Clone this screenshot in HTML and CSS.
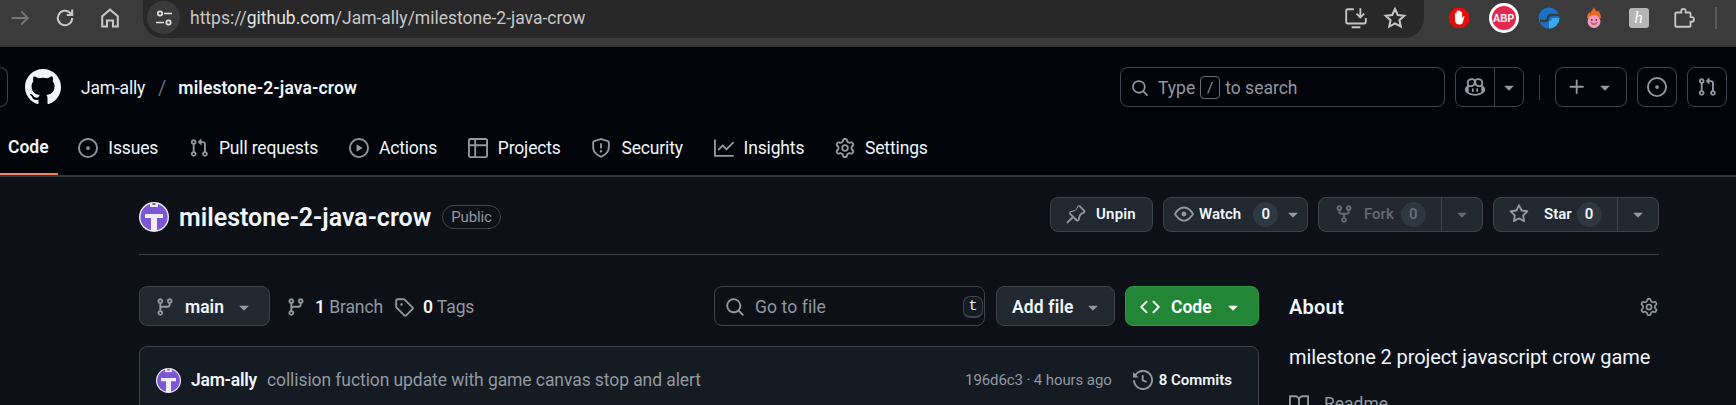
FILE: index.html
```html
<!DOCTYPE html>
<html lang="en">
<head>
    <meta charset="UTF-8">
    <meta name="viewport" content="width=device-width, initial-scale=1.0">
    <title>Jam-ally/milestone-2-java-crow</title>
    <link rel="stylesheet" href="styles.css">
</head>
<body>

<svg class="sprite" xmlns="http://www.w3.org/2000/svg">
    <symbol id="i-github" viewBox="0 0 16 16"><path d="M8 0c4.42 0 8 3.58 8 8a8.013 8.013 0 0 1-5.45 7.59c-.4.08-.55-.17-.55-.38 0-.27.01-1.13.01-2.2 0-.75-.25-1.23-.54-1.48 1.78-.2 3.65-.88 3.65-3.95 0-.88-.31-1.59-.82-2.15.08-.2.36-1.02-.08-2.12 0 0-.67-.22-2.2.82-.64-.18-1.32-.27-2-.27-.68 0-1.36.09-2 .27-1.53-1.03-2.2-.82-2.2-.82-.44 1.1-.16 1.92-.08 2.12-.51.56-.82 1.28-.82 2.15 0 3.06 1.86 3.75 3.64 3.95-.23.2-.44.55-.51 1.07-.46.21-1.61.55-2.33-.66-.15-.24-.6-.83-1.23-.82-.67.01-.27.38.01.53.34.19.73.9.82 1.13.16.45.68 1.31 2.69.94 0 .67.01 1.3.01 1.49 0 .21-.15.45-.55.38A7.995 7.995 0 0 1 0 8c0-4.42 3.58-8 8-8Z"/></symbol>
    <symbol id="i-issue" viewBox="0 0 16 16"><path d="M8 9.5a1.5 1.5 0 1 0 0-3 1.5 1.5 0 0 0 0 3Z"/><path d="M8 0a8 8 0 1 1 0 16A8 8 0 0 1 8 0ZM1.5 8a6.5 6.5 0 1 0 13 0 6.5 6.5 0 0 0-13 0Z"/></symbol>
    <symbol id="i-pr" viewBox="0 0 16 16"><path d="M1.5 3.25a2.25 2.25 0 1 1 3 2.122v5.256a2.251 2.251 0 1 1-1.5 0V5.372A2.25 2.25 0 0 1 1.5 3.25Zm5.677-.177L9.573.677A.25.25 0 0 1 10 .854V2.5h1A2.5 2.5 0 0 1 13.5 5v5.628a2.251 2.251 0 1 1-1.5 0V5a1 1 0 0 0-1-1h-1v1.646a.25.25 0 0 1-.427.177L7.177 3.427a.25.25 0 0 1 0-.354ZM3.75 2.5a.75.75 0 1 0 0 1.5.75.75 0 0 0 0-1.5Zm0 9.5a.75.75 0 1 0 0 1.5.75.75 0 0 0 0-1.5Zm8.25.75a.75.75 0 1 0 1.5 0 .75.75 0 0 0-1.5 0Z"/></symbol>
    <symbol id="i-play" viewBox="0 0 16 16"><path d="M8 0a8 8 0 1 1 0 16A8 8 0 0 1 8 0ZM1.5 8a6.5 6.5 0 1 0 13 0 6.5 6.5 0 0 0-13 0Zm4.879-2.773 4.264 2.559a.25.25 0 0 1 0 .428l-4.264 2.559A.25.25 0 0 1 6 10.559V5.442a.25.25 0 0 1 .379-.215Z"/></symbol>
    <symbol id="i-table" viewBox="0 0 16 16"><path d="M0 1.75C0 .784.784 0 1.75 0h12.5C15.216 0 16 .784 16 1.75v12.5A1.75 1.75 0 0 1 14.25 16H1.75A1.75 1.75 0 0 1 0 14.25ZM6.5 6.5v8h7.75a.25.25 0 0 0 .25-.25V6.5Zm8-1.5V1.75a.25.25 0 0 0-.25-.25H6.5V5Zm-13 1.5v7.75c0 .138.112.25.25.25H5v-8ZM5 5V1.5H1.75a.25.25 0 0 0-.25.25V5Z"/></symbol>
    <symbol id="i-shield" viewBox="0 0 16 16"><path d="M7.467.133a1.748 1.748 0 0 1 1.066 0l5.25 1.68A1.75 1.75 0 0 1 15 3.48V7c0 1.566-.32 3.182-1.303 4.682-.983 1.498-2.585 2.813-5.032 3.855a1.697 1.697 0 0 1-1.33 0c-2.447-1.042-4.049-2.357-5.032-3.855C1.32 10.182 1 8.566 1 7V3.48a1.75 1.75 0 0 1 1.217-1.667Zm.61 1.429a.25.25 0 0 0-.153 0l-5.25 1.68a.25.25 0 0 0-.174.238V7c0 1.358.275 2.666 1.057 3.86.784 1.194 2.121 2.34 4.366 3.297a.196.196 0 0 0 .154 0c2.245-.956 3.582-2.104 4.366-3.298C13.225 9.666 13.5 8.36 13.5 7V3.48a.25.25 0 0 0-.174-.237l-5.25-1.68ZM8.75 4.75v3a.75.75 0 0 1-1.5 0v-3a.75.75 0 0 1 1.5 0ZM9 10.5a1 1 0 1 1-2 0 1 1 0 0 1 2 0Z"/></symbol>
    <symbol id="i-graph" viewBox="0 0 16 16"><path d="M1.5 1.75V13.5h13.75a.75.75 0 0 1 0 1.5H.75a.75.75 0 0 1-.75-.75V1.75a.75.75 0 0 1 1.5 0Zm14.28 2.53-5.25 5.25a.75.75 0 0 1-1.06 0L7 7.06 4.28 9.78a.751.751 0 0 1-1.042-.018.751.751 0 0 1-.018-1.042l3.25-3.25a.75.75 0 0 1 1.06 0L10 7.94l4.72-4.72a.751.751 0 0 1 1.042.018.751.751 0 0 1 .018 1.042Z"/></symbol>
    <symbol id="i-gear" viewBox="0 0 16 16"><path d="M8 0a8.2 8.2 0 0 1 .701.031C9.444.095 9.99.645 10.16 1.29l.288 1.107c.018.066.079.158.212.224.231.114.454.243.668.386.123.082.233.09.299.071l1.103-.303c.644-.176 1.392.021 1.82.63.27.385.506.792.704 1.218.315.675.111 1.422-.364 1.891l-.814.806c-.049.048-.098.147-.088.294.016.257.016.515 0 .772-.01.147.038.246.088.294l.814.806c.475.469.679 1.216.364 1.891a7.977 7.977 0 0 1-.704 1.217c-.428.61-1.176.807-1.82.63l-1.102-.302c-.067-.019-.177-.011-.3.071a5.909 5.909 0 0 1-.668.386c-.133.066-.194.158-.211.224l-.29 1.106c-.168.646-.715 1.196-1.458 1.26a8.006 8.006 0 0 1-1.402 0c-.743-.064-1.289-.614-1.458-1.26l-.289-1.106c-.018-.066-.079-.158-.212-.224a5.738 5.738 0 0 1-.668-.386c-.123-.082-.233-.09-.299-.071l-1.103.303c-.644.176-1.392-.021-1.82-.63a8.12 8.12 0 0 1-.704-1.218c-.315-.675-.111-1.422.363-1.891l.815-.806c.05-.048.098-.147.088-.294a6.214 6.214 0 0 1 0-.772c.01-.147-.038-.246-.088-.294l-.815-.806C.635 6.045.431 5.298.746 4.623a7.92 7.92 0 0 1 .704-1.217c.428-.61 1.176-.807 1.82-.63l1.102.302c.067.019.177.011.3-.071.214-.143.437-.272.668-.386.133-.066.194-.158.211-.224l.29-1.106C6.009.645 6.556.095 7.299.03 7.53.01 7.764 0 8 0Zm-.571 1.525c-.036.003-.108.036-.137.146l-.289 1.105c-.147.561-.549.967-.998 1.189-.173.086-.34.183-.5.29-.417.278-.97.423-1.529.27l-1.103-.303c-.109-.03-.175.016-.195.045-.22.312-.412.644-.573.99-.014.031-.021.11.059.19l.815.806c.411.406.562.957.53 1.456a4.709 4.709 0 0 0 0 .582c.032.499-.119 1.05-.53 1.456l-.815.806c-.081.08-.073.159-.059.19.162.346.353.677.573.989.02.03.085.076.195.046l1.102-.303c.56-.153 1.113-.008 1.53.27.161.107.328.204.501.29.447.222.85.629.997 1.189l.289 1.105c.029.109.101.143.137.146a6.6 6.6 0 0 0 1.142 0c.036-.003.108-.036.137-.146l.289-1.105c.147-.561.549-.967.998-1.189.173-.086.34-.183.5-.29.417-.278.97-.423 1.529-.27l1.103.303c.109.029.175-.016.195-.045.22-.313.411-.644.573-.99.014-.031.021-.11-.059-.19l-.815-.806c-.411-.406-.562-.957-.53-1.456a4.709 4.709 0 0 0 0-.582c-.032-.499.119-1.05.53-1.456l.815-.806c.081-.08.073-.159.059-.19a6.464 6.464 0 0 0-.573-.989c-.02-.03-.085-.076-.195-.046l-1.102.303c-.56.153-1.113.008-1.53-.27a4.44 4.44 0 0 0-.501-.29c-.447-.222-.85-.629-.997-1.189l-.289-1.105c-.029-.11-.101-.143-.137-.146a6.6 6.6 0 0 0-1.142 0ZM11 8a3 3 0 1 1-6 0 3 3 0 0 1 6 0ZM9.5 8a1.5 1.5 0 1 0-3.001.001A1.5 1.5 0 0 0 9.5 8Z"/></symbol>
    <symbol id="i-search" viewBox="0 0 16 16"><path d="M10.68 11.74a6 6 0 0 1-7.922-8.982 6 6 0 0 1 8.982 7.922l3.04 3.04a.749.749 0 0 1-.326 1.275.749.749 0 0 1-.734-.215ZM11.5 7a4.499 4.499 0 1 0-8.997 0A4.499 4.499 0 0 0 11.5 7Z"/></symbol>
    <symbol id="i-plus" viewBox="0 0 16 16"><path d="M7.75 2a.75.75 0 0 1 .75.75V7h4.25a.75.75 0 0 1 0 1.5H8.5v4.25a.75.75 0 0 1-1.5 0V8.5H2.75a.75.75 0 0 1 0-1.5H7V2.75A.75.75 0 0 1 7.75 2Z"/></symbol>
    <symbol id="i-branch" viewBox="0 0 16 16"><path d="M9.5 3.25a2.25 2.25 0 1 1 3 2.122V6A2.5 2.5 0 0 1 10 8.5H6a1 1 0 0 0-1 1v1.128a2.251 2.251 0 1 1-1.5 0V5.372a2.25 2.25 0 1 1 1.5 0v1.836A2.493 2.493 0 0 1 6 7h4a1 1 0 0 0 1-1v-.628A2.25 2.25 0 0 1 9.5 3.25Zm-6 0a.75.75 0 1 0 1.5 0 .75.75 0 0 0-1.5 0Zm8.25-.75a.75.75 0 1 0 0 1.5.75.75 0 0 0 0-1.5ZM4.25 12a.75.75 0 1 0 0 1.5.75.75 0 0 0 0-1.5Z"/></symbol>
    <symbol id="i-tag" viewBox="0 0 16 16"><path d="M1 7.775V2.75C1 1.784 1.784 1 2.75 1h5.025c.464 0 .91.184 1.238.513l6.25 6.25a1.75 1.75 0 0 1 0 2.474l-5.026 5.026a1.75 1.75 0 0 1-2.474 0l-6.25-6.25A1.752 1.752 0 0 1 1 7.775Zm1.5 0c0 .066.026.13.073.177l6.25 6.25a.25.25 0 0 0 .354 0l5.025-5.025a.25.25 0 0 0 0-.354l-6.25-6.25a.25.25 0 0 0-.177-.073H2.75a.25.25 0 0 0-.25.25ZM6 5a1 1 0 1 1 0 2 1 1 0 0 1 0-2Z"/></symbol>
    <symbol id="i-pin" viewBox="0 0 16 16"><path d="m11.294.984 3.722 3.722a1.75 1.75 0 0 1-.504 2.826l-1.327.613a3.089 3.089 0 0 0-1.707 2.084l-.584 2.454c-.317 1.332-1.972 1.8-2.94.832L5.75 11.311 1.78 15.28a.749.749 0 0 1-1.275-.326.749.749 0 0 1 .215-.734L4.69 10.25 2.985 8.545c-.968-.968-.5-2.623.832-2.94l2.454-.584a3.08 3.08 0 0 0 2.084-1.707l.613-1.327a1.75 1.75 0 0 1 2.826-.504ZM6.283 9.723l2.732 2.731a.25.25 0 0 0 .42-.119l.584-2.454a4.586 4.586 0 0 1 2.537-3.098l1.328-.613a.25.25 0 0 0 .072-.404l-3.722-3.722a.25.25 0 0 0-.404.072l-.613 1.328a4.584 4.584 0 0 1-3.098 2.537l-2.454.584a.25.25 0 0 0-.119.42l2.731 2.732Z"/></symbol>
    <symbol id="i-eye" viewBox="0 0 16 16"><path d="M8 2c1.981 0 3.671.992 4.933 2.078 1.27 1.091 2.187 2.345 2.637 3.023a1.62 1.62 0 0 1 0 1.798c-.45.678-1.367 1.932-2.637 3.023C11.67 13.008 9.981 14 8 14c-1.981 0-3.671-.992-4.933-2.078C1.797 10.83.88 9.576.43 8.898a1.62 1.62 0 0 1 0-1.798c.45-.677 1.367-1.931 2.637-3.022C4.33 2.992 6.019 2 8 2ZM1.679 7.932a.12.12 0 0 0 0 .136c.411.622 1.241 1.75 2.366 2.717C5.176 11.758 6.527 12.5 8 12.5c1.473 0 2.825-.742 3.955-1.715 1.124-.967 1.954-2.096 2.366-2.717a.12.12 0 0 0 0-.136c-.412-.621-1.242-1.75-2.366-2.717C10.824 4.242 9.473 3.5 8 3.5c-1.473 0-2.825.742-3.955 1.715-1.124.967-1.954 2.096-2.366 2.717ZM8 10a2 2 0 1 1-.001-3.999A2 2 0 0 1 8 10Z"/></symbol>
    <symbol id="i-fork" viewBox="0 0 16 16"><path d="M5 5.372v.878c0 .414.336.75.75.75h4.5a.75.75 0 0 0 .75-.75v-.878a2.25 2.25 0 1 1 1.5 0v.878a2.25 2.25 0 0 1-2.25 2.25h-1.5v2.128a2.251 2.251 0 1 1-1.5 0V8.5h-1.5A2.25 2.25 0 0 1 3.5 6.25v-.878a2.25 2.25 0 1 1 1.5 0ZM5 3.25a.75.75 0 1 0-1.5 0 .75.75 0 0 0 1.5 0Zm6.75.75a.75.75 0 1 0 0-1.5.75.75 0 0 0 0 1.5Zm-3 8.75a.75.75 0 1 0-1.5 0 .75.75 0 0 0 1.5 0Z"/></symbol>
    <symbol id="i-star" viewBox="0 0 16 16"><path d="M8 .25a.75.75 0 0 1 .673.418l1.882 3.815 4.21.612a.75.75 0 0 1 .416 1.279l-3.046 2.97.719 4.192a.751.751 0 0 1-1.088.791L8 12.347l-3.766 1.98a.75.75 0 0 1-1.088-.79l.72-4.194L.818 6.374a.75.75 0 0 1 .416-1.28l4.21-.611L7.327.668A.75.75 0 0 1 8 .25Zm0 2.445L6.615 5.5a.75.75 0 0 1-.564.41l-3.097.45 2.24 2.184a.75.75 0 0 1 .216.664l-.528 3.084 2.769-1.456a.75.75 0 0 1 .698 0l2.77 1.456-.53-3.084a.75.75 0 0 1 .216-.664l2.24-2.183-3.096-.45a.75.75 0 0 1-.564-.41L8 2.694Z"/></symbol>
    <symbol id="i-code" viewBox="0 0 16 16"><path d="m11.28 3.22 4.25 4.25a.75.75 0 0 1 0 1.06l-4.25 4.25a.749.749 0 0 1-1.275-.326.749.749 0 0 1 .215-.734L13.94 8l-3.72-3.72a.749.749 0 0 1 .326-1.275.749.749 0 0 1 .734.215Zm-6.56 0a.751.751 0 0 1 1.042.018.751.751 0 0 1 .018 1.042L2.06 8l3.72 3.72a.749.749 0 0 1-.326 1.275.749.749 0 0 1-.734-.215L.47 8.53a.75.75 0 0 1 0-1.06Z"/></symbol>
    <symbol id="i-history" viewBox="0 0 16 16"><path d="m.427 1.927 1.215 1.215a8.002 8.002 0 1 1-1.6 5.685.75.75 0 1 1 1.493-.154 6.5 6.5 0 1 0 1.18-4.458l1.358 1.358A.25.25 0 0 1 3.896 6H.25A.25.25 0 0 1 0 5.75V2.104a.25.25 0 0 1 .427-.177ZM7.75 4a.75.75 0 0 1 .75.75v2.992l2.028.812a.75.75 0 0 1-.557 1.392l-2.5-1A.751.751 0 0 1 7 8.25v-3.5A.75.75 0 0 1 7.75 4Z"/></symbol>
    <symbol id="i-book" viewBox="0 0 16 16"><path d="M0 1.75A.75.75 0 0 1 .75 1h4.253c1.227 0 2.317.59 3 1.501A3.743 3.743 0 0 1 11.006 1h4.245a.75.75 0 0 1 .75.75v10.5a.75.75 0 0 1-.75.75h-4.507a2.25 2.25 0 0 0-1.591.659l-.622.621a.75.75 0 0 1-1.06 0l-.622-.621A2.25 2.25 0 0 0 5.258 13H.75a.75.75 0 0 1-.75-.75Zm7.251 10.324.004-5.073-.002-2.253A2.25 2.25 0 0 0 5.003 2.5H1.5v9h3.757a3.75 3.75 0 0 1 1.994.574ZM8.755 4.75l-.004 7.322a3.752 3.752 0 0 1 1.992-.572H14.5v-9h-3.495a2.25 2.25 0 0 0-2.25 2.25Z"/></symbol>
    <symbol id="i-caret" viewBox="0 0 16 16"><path d="m4.427 7.427 3.396 3.396a.25.25 0 0 0 .354 0l3.396-3.396A.25.25 0 0 0 11.396 7H4.604a.25.25 0 0 0-.177.427Z"/></symbol>
    <symbol id="i-copilot" viewBox="0 0 16 16"><path d="M7.998 15.035c-4.562 0-7.873-2.914-7.998-3.749V9.338c.085-.628.677-1.686 1.588-2.065.013-.07.024-.143.036-.218.029-.183.06-.384.126-.612-.201-.508-.254-1.084-.254-1.656 0-.87.128-1.769.693-2.484.579-.733 1.494-1.124 2.724-1.261 1.206-.134 2.262.034 2.944.765.05.053.096.108.139.165.044-.057.094-.112.143-.165.682-.731 1.738-.899 2.944-.765 1.23.137 2.145.528 2.724 1.261.566.715.693 1.614.693 2.484 0 .572-.053 1.148-.254 1.656.066.228.098.429.126.612.012.076.024.148.037.218.924.385 1.522 1.471 1.591 2.095v1.872c0 .766-3.351 3.795-8.002 3.795Zm0-1.485c2.28 0 4.584-1.11 5.002-1.433V7.862l-.023-.116c-.49.21-1.075.291-1.727.291-1.146 0-2.059-.327-2.71-.991A3.222 3.222 0 0 1 8 6.303a3.24 3.24 0 0 1-.544.743c-.65.664-1.563.991-2.71.991-.652 0-1.236-.081-1.727-.291l-.023.116v4.255c.419.323 2.722 1.433 5.002 1.433ZM6.762 2.83c-.193-.206-.637-.413-1.682-.297-1.019.113-1.479.404-1.713.7-.247.312-.369.789-.369 1.554 0 .793.129 1.171.308 1.371.162.181.519.379 1.442.379.853 0 1.339-.235 1.638-.54.315-.322.527-.827.617-1.553.117-.935-.037-1.395-.241-1.614Zm4.155-.297c-1.044-.116-1.488.091-1.681.297-.204.219-.359.679-.242 1.614.091.726.303 1.231.618 1.553.299.305.784.54 1.638.54.922 0 1.28-.198 1.442-.379.179-.2.308-.578.308-1.371 0-.765-.123-1.242-.37-1.554-.233-.296-.693-.587-1.713-.7Z"/><path d="M6.25 9.037a.75.75 0 0 1 .75.75v1.501a.75.75 0 0 1-1.5 0V9.787a.75.75 0 0 1 .75-.75Zm4.25.75v1.501a.75.75 0 0 1-1.5 0V9.787a.75.75 0 0 1 1.5 0Z"/></symbol>
    <symbol id="i-avatar" viewBox="0 0 30 30">
        <circle cx="15" cy="15" r="15" fill="#efeef4"/>
        <circle cx="15" cy="15" r="13.6" fill="#7d56d6"/>
        <path d="M11 1h8v4h-8z" fill="#efeef4"/>
        <path d="M13.5 1h3v2h-3z" fill="#7d56d6"/>
        <path d="M6 12h18v4h-6v13h-6V16H6z" fill="#efeef4"/>
    </symbol>
</svg>

<!-- browser toolbar -->
<div class="browser">
    <div class="browser-nav">
        <svg class="tb-icon dim" viewBox="0 0 20 20"><path d="M3 10h13M11 4.500l5.500 5.500-5.500 5.500"/></svg>
        <svg class="tb-icon" viewBox="0 0 20 20"><path d="M16 10a6 6 0 1 1-1.800-4.300L16 7.500M16 3v4.500h-4.500"/></svg>
        <svg class="tb-icon" viewBox="0 0 20 20"><path d="M3.500 17V8.500L10 3l6.500 5.500V17H12.500v-5h-5v5z"/></svg>
    </div>
    <div class="omnibox">
        <span class="site-info">
            <svg class="tb-icon small" viewBox="0 0 20 20"><circle cx="6" cy="5.500" r="2.200"/><path d="M10 5.500h8M2 14.500h8"/><circle cx="14.500" cy="14.500" r="2.200"/></svg>
        </span>
        <span class="url"><span class="url-scheme">https://</span>github.com<span class="url-scheme">/Jam-ally/milestone-2-java-crow</span></span>
        <span class="omni-right">
            <svg class="tb-icon" viewBox="0 0 22 22"><path d="M9 3H3.500A1.500 1.500 0 0 0 2 4.500v10A1.500 1.500 0 0 0 3.500 16h15a1.500 1.500 0 0 0 1.500-1.500V11M15 2v8M11.500 7l3.500 3.500L18.500 7M7 19.500h8"/></svg>
            <svg class="tb-icon" viewBox="0 0 20 20"><path d="M10 2.500l2.300 5 5.400.6-4 3.700 1.100 5.400L10 14.500l-4.800 2.700 1.100-5.400-4-3.700 5.400-.6z"/></svg>
        </span>
    </div>
    <div class="extensions">
        <span class="ext">
            <svg class="ext-svg" viewBox="0 0 22 22"><path d="M6.500 1h9L21 6.500v9L15.500 21h-9L1 15.500v-9z" fill="#e40d0d"/><path d="M7 11V7a1 1 0 0 1 1.600-.8V4.500a1 1 0 0 1 2 0V4a1 1 0 0 1 1.800 0v1a1 1 0 0 1 1.700.500V11l1-1.500c.8-.7 1.800 0 1.200 1L14.500 16c-.6 1-1.500 1.500-3 1.500-3 0-4.500-2-4.500-4.500z" fill="#fff"/></svg>
        </span>
        <span class="ext">
            <span class="abp"><span class="abp-label">ABP</span></span>
        </span>
        <span class="ext">
            <svg class="ext-svg" viewBox="0 0 22 22"><circle cx="11" cy="11" r="10.500" fill="#1a73c9"/><path d="M11 21.500A10.500 10.500 0 0 0 21.500 11H14a3 3 0 0 1-3 3z" fill="#37a8ee"/><path d="M21 8h-8c-2 0-3 1-3 3s-1 3-3 3H2" fill="none" stroke="#3b3b3b" stroke-width="2.400"/></svg>
        </span>
        <span class="ext">
            <svg class="ext-svg" viewBox="0 0 22 22"><path d="M11 0c.5 2.500 2.500 3.500 3 5 .5-.5.800-1 .8-1.800 2 2 3.200 4.500 3.200 7.800H4c0-2.500 1-4.500 2.500-6 0 1 .3 1.500.8 2C7.500 4 10 3 11 0z" fill="#f4651f"/><circle cx="11" cy="14.500" r="6.500" fill="#f59ab8"/><circle cx="8.800" cy="13" r=".9" fill="#7a2a3f"/><circle cx="13.200" cy="13" r=".9" fill="#7a2a3f"/><path d="M8 15.500c1 2.200 5 2.200 6 0" fill="none" stroke="#7a2a3f" stroke-width="1"/></svg>
        </span>
        <span class="ext">
            <span class="h-badge">h</span>
        </span>
        <span class="ext">
            <svg class="tb-icon" viewBox="0 0 22 22"><path d="M4 6h4.500V4.700a2 2 0 0 1 4 0V6H16a1 1 0 0 1 1 1v3.200h1a2.100 2.100 0 0 1 0 4.200h-1V18a1 1 0 0 1-1 1H4a1 1 0 0 1-1-1V7a1 1 0 0 1 1-1z"/></svg>
        </span>
        <span class="tb-divider"></span>
    </div>
</div>

<!-- github header -->
<header class="gh-header">
    <div class="top-row">
        <span class="menu-btn"></span>
        <svg class="logo"><use href="#i-github"/></svg>
        <span class="owner">Jam-ally</span>
        <span class="slash">/</span>
        <span class="repo-link">milestone-2-java-crow</span>

        <div class="search-box">
            <svg class="ic18 muted"><use href="#i-search"/></svg>
            <span>Type</span>
            <kbd class="slash-key">/</kbd>
            <span>to search</span>
        </div>
        <div class="head-btn copilot">
            <span class="copilot-main"><svg class="ic20 muted"><use href="#i-copilot"/></svg></span>
            <span class="copilot-caret"><svg class="ic20 muted"><use href="#i-caret"/></svg></span>
        </div>
        <span class="head-divider"></span>
        <div class="head-btn plus"><svg class="ic20 muted"><use href="#i-plus"/></svg><svg class="ic20 muted"><use href="#i-caret"/></svg></div>
        <div class="head-btn square"><svg class="ic20 muted"><use href="#i-issue"/></svg></div>
        <div class="head-btn square"><svg class="ic20 muted"><use href="#i-pr"/></svg></div>
    </div>
    <nav class="tabs">
        <a class="tab active" href="#">Code</a>
        <a class="tab" href="#"><svg class="ic20 muted"><use href="#i-issue"/></svg>Issues</a>
        <a class="tab" href="#"><svg class="ic20 muted"><use href="#i-pr"/></svg>Pull requests</a>
        <a class="tab" href="#"><svg class="ic20 muted"><use href="#i-play"/></svg>Actions</a>
        <a class="tab" href="#"><svg class="ic20 muted"><use href="#i-table"/></svg>Projects</a>
        <a class="tab" href="#"><svg class="ic20 muted"><use href="#i-shield"/></svg>Security</a>
        <a class="tab" href="#"><svg class="ic20 muted"><use href="#i-graph"/></svg>Insights</a>
        <a class="tab" href="#"><svg class="ic20 muted"><use href="#i-gear"/></svg>Settings</a>
    </nav>
</header>

<main class="repo">
    <div class="repo-head">
        <svg class="avatar"><use href="#i-avatar"/></svg>
        <h1 class="repo-title">milestone-2-java-crow</h1>
        <span class="public">Public</span>
        <div class="repo-actions">
            <div class="btn unpin"><svg class="ic20 muted"><use href="#i-pin"/></svg>Unpin</div>
            <div class="btn watch"><svg class="ic20 muted"><use href="#i-eye"/></svg>Watch<span class="count">0</span><svg class="ic20 muted"><use href="#i-caret"/></svg></div>
            <div class="btn split fork disabled">
                <span class="split-main"><svg class="ic20"><use href="#i-fork"/></svg>Fork<span class="count">0</span></span>
                <span class="split-caret"><svg class="ic20"><use href="#i-caret"/></svg></span>
            </div>
            <div class="btn split star">
                <span class="split-main"><svg class="ic20 muted"><use href="#i-star"/></svg>Star<span class="count">0</span></span>
                <span class="split-caret"><svg class="ic20 muted"><use href="#i-caret"/></svg></span>
            </div>
        </div>
    </div>

    <div class="repo-body">
        <section class="files">
            <div class="file-bar">
                <div class="btn branch-btn"><svg class="ic20 muted"><use href="#i-branch"/></svg><span>main</span><svg class="ic20 muted"><use href="#i-caret"/></svg></div>
                <span class="meta"><svg class="ic20 muted"><use href="#i-branch"/></svg><b>1</b> Branch</span>
                <span class="meta"><svg class="ic20 muted"><use href="#i-tag"/></svg><b>0</b> Tags</span>
                <div class="goto">
                    <svg class="ic20 muted"><use href="#i-search"/></svg>
                    <span class="goto-text">Go to file</span>
                    <kbd class="t-key">t</kbd>
                </div>
                <div class="btn add-file">Add file<svg class="ic20 muted"><use href="#i-caret"/></svg></div>
                <div class="btn code-btn"><svg class="ic20"><use href="#i-code"/></svg>Code<svg class="ic20"><use href="#i-caret"/></svg></div>
            </div>
            <div class="commit-box">
                <svg class="commit-avatar"><use href="#i-avatar"/></svg>
                <span class="commit-author">Jam-ally</span>
                <span class="commit-msg">collision fuction update with game canvas stop and alert</span>
                <span class="commit-time">196d6c3 · 4 hours ago</span>
                <svg class="ic20 muted"><use href="#i-history"/></svg>
                <span class="commit-count">8 Commits</span>
            </div>
        </section>

        <aside class="about">
            <div class="about-head">
                <h2>About</h2>
                <svg class="ic18 muted"><use href="#i-gear"/></svg>
            </div>
            <p class="about-text">milestone 2 project javascript crow game</p>
            <div class="about-link"><svg class="ic20 muted"><use href="#i-book"/></svg>Readme</div>
        </aside>
    </div>
</main>

</body>
</html>
```

FILE: styles.css
```css
* {
    box-sizing: border-box;
}
html, body {
    height: 405px;
    overflow: hidden;
}
body {
    margin: 0;
    background-color: #0d1117;
    color: #f0f6fc;
    font-family: Roboto, "Noto Sans", sans-serif;
    font-size: 17.5px;
}
.sprite {
    display: none;
}
a {
    color: inherit;
    text-decoration: none;
}
svg {
    flex: none;
    fill: currentColor;
}
.ic18 {
    width: 18px;
    height: 18px;
}
.ic20 {
    width: 20px;
    height: 20px;
}
.muted {
    color: #9198a1;
}

/* browser toolbar */
.browser {
    display: flex;
    height: 47px;
    background-color: #3b3b3b;
    border-bottom: 2px solid #343434;
}
.browser-nav {
    display: flex;
    gap: 5px;
    height: 36px;
    align-items: center;
}
.browser-nav .tb-icon {
    width: 40px;
}
.tb-icon {
    width: 24px;
    height: 24px;
    fill: none;
    stroke: #c7c7c7;
    stroke-width: 1.7;
}
.tb-icon.dim {
    stroke: #757575;
}
.tb-icon.small {
    width: 20px;
    height: 20px;
    stroke: #e3e3e3;
}
.omnibox {
    display: flex;
    align-items: center;
    width: 1281px;
    height: 38px;
    margin-left: 13px;
    padding: 0 17px 3px 4px;
    background-color: #282828;
    border-radius: 0 0 20px 20px;
}
.site-info {
    display: flex;
    align-items: center;
    justify-content: center;
    width: 33px;
    height: 33px;
    border-radius: 50%;
    background-color: #3b3b3b;
}
.url {
    margin-left: 10px;
    color: #e3e3e3;
}
.url-scheme {
    color: #c7c7c7;
}
.omni-right {
    display: flex;
    gap: 15px;
    margin-left: auto;
}
.extensions {
    display: flex;
    align-items: center;
    height: 36px;
    margin-left: 12px;
}
.ext {
    display: flex;
    align-items: center;
    justify-content: center;
    width: 45px;
}
.ext-svg {
    width: 22px;
    height: 22px;
}
.abp {
    display: flex;
    align-items: center;
    justify-content: center;
    width: 30px;
    height: 30px;
    border-radius: 50%;
    background-color: #e6284e;
    border: 3px solid #fff;
}
.abp-label {
    color: #fff;
    font-family: "Liberation Sans", sans-serif;
    font-size: 10px;
    font-weight: 700;
}
.h-badge {
    display: flex;
    align-items: center;
    justify-content: center;
    width: 20px;
    height: 20px;
    border-radius: 3px;
    background-color: #b5b5b5;
    color: #fff;
    font-family: "Liberation Serif", serif;
    font-style: italic;
    font-size: 17px;
}
.tb-divider {
    width: 2px;
    height: 22px;
    margin-left: 9px;
    background-color: #5a5a5a;
}

/* github header */
.gh-header {
    height: 130px;
    padding-top: 20px;
    background-color: #010409;
    border-bottom: 2px solid #30363d;
}
.top-row {
    display: flex;
    align-items: center;
    height: 40px;
}
.menu-btn {
    width: 8px;
    height: 40px;
    border: 1px solid #3d444d;
    border-left: 0;
    border-radius: 0 8px 8px 0;
}
.logo {
    width: 36px;
    height: 36px;
    margin-left: 17px;
    color: #f0f6fc;
}
.owner {
    margin: 1px 0 0 20px;
    letter-spacing: -.2px;
}
.slash {
    margin: 1px 0 0 13px;
    color: #656c76;
    font-size: 20px;
}
.repo-link {
    margin: 1px 0 0 12px;
    font-weight: 600;
    letter-spacing: .1px;
}
.search-box {
    display: flex;
    align-items: center;
    gap: 5px;
    width: 325px;
    height: 40px;
    margin-left: auto;
    padding: 1px 10px 0;
    border: 1px solid #3d444d;
    border-radius: 8px;
    color: #9198a1;
}
.search-box .ic18 {
    margin-right: 4px;
}
.slash-key {
    display: flex;
    align-items: center;
    justify-content: center;
    width: 20px;
    height: 23px;
    border: 1px solid #656c76;
    border-radius: 4px;
    font-family: inherit;
    font-size: 15px;
}
.head-btn {
    display: flex;
    align-items: center;
    height: 40px;
    border: 1px solid #3d444d;
    border-radius: 8px;
}
.copilot {
    width: 69px;
    margin-left: 10px;
}
.copilot-main {
    display: flex;
    align-items: center;
    justify-content: center;
    width: 40px;
    height: 100%;
    border-right: 1px solid #3d444d;
}
.copilot-caret {
    display: flex;
    align-items: center;
    justify-content: center;
    width: 28px;
}
.head-divider {
    width: 1px;
    height: 25px;
    margin: 0 15px;
    background-color: #3d444d;
}
.plus {
    justify-content: center;
    gap: 8px;
    width: 72px;
}
.square {
    justify-content: center;
    width: 40px;
    margin-left: 10px;
}
.head-btn.square:last-child {
    margin-right: 9px;
}
.tabs {
    display: flex;
    gap: 10.7px;
    height: 68px;
}
.tab {
    display: flex;
    align-items: center;
    gap: 10px;
    height: 68px;
    padding: 13px 10px 0;
    letter-spacing: -.15px;
}
.tab.active {
    padding: 13px 9px 0 8px;
    font-weight: 600;
    letter-spacing: 0;
    border-bottom: 2px solid #f78166;
}

/* repo */
.repo {
    width: 1520px;
    margin-left: 139px;
}
.repo-head {
    display: flex;
    align-items: center;
    height: 58px;
    margin-top: 20px;
    padding-bottom: 23px;
    border-bottom: 1px solid #3d444d;
}
.avatar {
    width: 30px;
    height: 30px;
    margin-top: 5px;
}
.repo-title {
    margin: 6px 0 0 10px;
    font-size: 25px;
    font-weight: 600;
}
.public {
    margin: 5px 0 0 11px;
    padding: 0 8px;
    height: 24px;
    line-height: 22px;
    border: 1px solid #3d444d;
    border-radius: 12px;
    color: #9198a1;
    font-size: 15px;
    letter-spacing: -.1px;
}
.repo-actions {
    display: flex;
    gap: 10px;
    margin-left: auto;
}
.btn {
    display: flex;
    align-items: center;
    height: 35px;
    background-color: #212830;
    border: 1px solid #3d444d;
    border-radius: 8px;
    font-size: 15px;
    font-weight: 600;
}
.unpin {
    gap: 10px;
    width: 103px;
    padding-left: 15px;
    letter-spacing: .2px;
}
.watch {
    width: 145px;
    padding-left: 10px;
    gap: 5px;
}
.count {
    display: inline-block;
    min-width: 25px;
    height: 25px;
    margin-left: 7px;
    border-radius: 13px;
    background-color: #2f3742;
    text-align: center;
    line-height: 25px;
    font-weight: 600;
}
.split-main {
    display: flex;
    align-items: center;
    height: 100%;
    border-right: 1px solid #3d444d;
}
.split-caret {
    display: flex;
    align-items: center;
    justify-content: center;
    flex: 1;
}
.fork {
    width: 165px;
}
.fork .split-main {
    width: 123px;
    gap: 7px;
    padding-left: 15px;
}
.fork .split-main svg {
    margin-right: 3px;
}
.fork .count {
    margin-left: 0;
}
.disabled {
    color: #656c76;
    font-weight: 500;
}
.star {
    width: 166px;
}
.star .split-main {
    width: 124px;
    gap: 5px;
    padding-left: 15px;
}
.star .split-main svg {
    margin-right: 10px;
}
.star .count {
    margin-left: 0;
}
.repo-body {
    display: flex;
    gap: 30px;
    margin-top: 31px;
}
.files {
    width: 1120px;
}
.file-bar {
    display: flex;
    align-items: center;
    height: 40px;
}
.file-bar .btn {
    height: 40px;
    font-size: 17.5px;
    padding-top: 1px;
}
.branch-btn {
    width: 131px;
    padding-left: 15px;
    gap: 10px;
}
.meta {
    display: flex;
    align-items: center;
    padding-top: 1px;
    color: #9198a1;
    letter-spacing: -.1px;
    white-space: pre;
}
.meta b {
    color: #f0f6fc;
    font-weight: 600;
}
.meta:nth-child(2) {
    margin-left: 16px;
}
.meta:nth-child(3) {
    margin-left: 11px;
}
.meta .ic20 {
    margin-right: 9px;
}
.goto {
    display: flex;
    align-items: center;
    width: 271px;
    height: 40px;
    margin-left: auto;
    padding: 1px 1px 0 10px;
    border: 1px solid #3d444d;
    border-radius: 8px;
    color: #9198a1;
}
.goto-text {
    flex: 1;
    margin-left: 10px;
    letter-spacing: .1px;
}
.t-key {
    display: flex;
    align-items: center;
    justify-content: center;
    width: 20px;
    height: 22px;
    border: 1px solid #3d444d;
    border-bottom-width: 2px;
    border-radius: 7px;
    background-color: #151b23;
    color: #f0f6fc;
    font-family: "Liberation Mono", monospace;
    font-size: 15px;
}
.add-file {
    width: 119px;
    margin-left: 11px;
    padding-left: 15px;
    gap: 9px;
    letter-spacing: .15px;
}
.file-bar .code-btn {
    width: 134px;
    margin-left: 10px;
    padding-left: 14px;
    gap: 11px;
    background-color: #238636;
    border-color: #2c9a43;
    color: #fff;
}
.commit-box {
    display: flex;
    align-items: center;
    height: 70px;
    margin-top: 20px;
    padding: 0 26px 2px 16px;
    background-color: #151b23;
    border: 1px solid #3d444d;
    border-radius: 8px 8px 0 0;
}
.commit-avatar {
    width: 25px;
    height: 25px;
}
.commit-author {
    margin-left: 10px;
    font-weight: 600;
    letter-spacing: -.25px;
}
.commit-msg {
    margin-left: 10px;
    color: #9198a1;
    letter-spacing: -.08px;
}
.commit-time {
    margin-left: auto;
    margin-right: 21px;
    color: #9198a1;
    font-size: 15px;
    letter-spacing: -.1px;
}
.commit-count {
    margin-left: 6px;
    font-size: 15px;
    font-weight: 600;
}
.about {
    width: 370px;
    padding-top: 1px;
}
.about-head {
    display: flex;
    align-items: center;
    justify-content: space-between;
    height: 40px;
    padding-right: 1px;
}
.about-head h2 {
    margin: 0;
    font-size: 20px;
    font-weight: 600;
    letter-spacing: .2px;
}
.about-text {
    margin: 18px 0 0;
    font-size: 20px;
    letter-spacing: -.1px;
}
.about-link {
    display: flex;
    gap: 15px;
    margin-top: 25px;
    color: #9198a1;
}
```
